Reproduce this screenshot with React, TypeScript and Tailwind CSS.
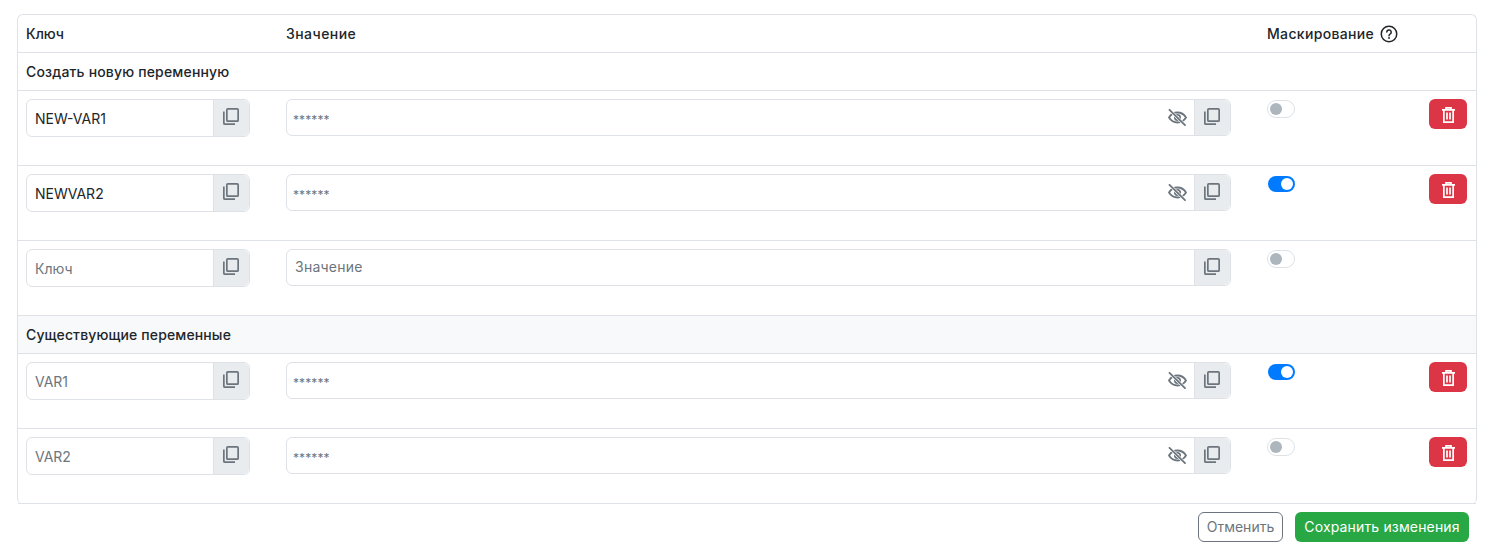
const CopyIcon = () => (
  <svg width="16" height="17" viewBox="0 0 16 17" fill="none" stroke="#6c757d" strokeWidth="1.7">
    <rect x="3.850" y="0.850" width="11.300" height="12.300" rx="1" />
    <path d="M.85 3.500v11.650a1 1 0 0 0 1 1h10.150" />
  </svg>
);

const EyeOffIcon = () => (
  <svg width="19" height="17" viewBox="0 0 19 17" fill="none" stroke="#6c757d" strokeWidth="1.8" strokeLinecap="round">
    <path d="M1 8.500c2-3.300 5-5 8.500-5s6.500 1.700 8.500 5c-2 3.300-5 5-8.500 5s-6.500-1.700-8.500-5z" />
    <circle cx="9.500" cy="8.500" r="2.600" />
    <path d="M1.500 .9L17 16.100" stroke="#fff" strokeWidth="3" />
    <path d="M1.500 .9L17 16.100" />
  </svg>
);

const TrashIcon = () => (
  <svg width="13" height="16" viewBox="0 0 13 16" fill="none" stroke="#fff" strokeWidth="1.700">
    <path d="M0 2.850h13M4 2.500V.85h5V2.500" />
    <path d="M1.850 2.850v12.300h9.300V2.850" />
    <path d="M5 5.500v7M8 5.500v7" />
  </svg>
);

const HelpIcon = () => (
  <svg width="18" height="18" viewBox="0 0 18 18" fill="none" stroke="#212529" strokeWidth="1.500" strokeLinecap="round">
    <circle cx="9" cy="9" r="7.750" />
    <path d="M6.800 7.100a2.200 2.200 0 1 1 3.500 1.800c-.8.500-1.300.9-1.300 1.800" />
    <path d="M9 13v.1" strokeWidth="1.800" />
  </svg>
);

const Toggle = ({ on }: { on: boolean }) =>
  on ? (
    <span className="mt-[1px] ml-[1px] flex h-4 w-[27px] items-center justify-end rounded-full bg-[#007bff] pr-[2px]">
      <span className="h-3 w-3 rounded-full bg-white" />
    </span>
  ) : (
    <span className="flex h-[18px] w-7 items-center rounded-full border border-[#dee2e6] bg-white pl-[2px]">
      <span className="h-3 w-3 rounded-full bg-[#adb5bd]" />
    </span>
  );

const CopyAddon = () => (
  <span className="flex w-9 shrink-0 items-center justify-center rounded-r-md border-l border-[#dee2e6] bg-[#e9ecef] pr-[2px] pb-[3px]">
    <CopyIcon />
  </span>
);

type RowProps = {
  keyName: string;
  keyFilled?: boolean;
  masked?: boolean;
  on?: boolean;
  removable?: boolean;
};

const VarRow = ({ keyName, keyFilled, masked = true, on = false, removable = true }: RowProps) => (
  <div className="flex h-[75px] border-b border-[#dee2e6] pt-2 pr-[9px] pl-2">
    <div className="flex h-[38px] w-[224px] rounded-md border border-[#dee2e6] bg-white">
      <span className={`flex flex-1 items-center pt-[2px] pl-2 ${keyFilled ? "text-[#212529]" : "text-[#6c757d]"}`}>{keyName}</span>
      <CopyAddon />
    </div>
    <div className="ml-9 flex h-[37px] w-[945px] rounded-md border border-[#dee2e6] bg-white">
      {masked ? (
        <>
          <span className="flex flex-1 items-center pt-1 pl-[6px] text-xs tracking-[0.1px] text-[#6c757d]">******</span>
          <span className="flex w-[34px] items-center justify-center">
            <EyeOffIcon />
          </span>
        </>
      ) : (
        <span className="flex flex-1 items-center pb-[2px] pl-2 tracking-[0.25px] text-[#6c757d]">Значение</span>
      )}
      <CopyAddon />
    </div>
    <div className="ml-9 pt-[1px]">
      <Toggle on={on} />
    </div>
    {removable && (
      <button className="ml-auto flex h-[30px] w-[38px] items-center justify-center rounded-md bg-[#dc3545] pt-[1px]">
        <TrashIcon />
      </button>
    )}
  </div>
);

const App = () => {
  return (
    <div className="h-[554px] w-[1492px] bg-white pt-[14px] pl-[17px] font-['Inter',sans-serif] text-sm text-[#212529]">
      <div className="w-[1460px] rounded-md border border-b-0 border-[#dee2e6]">
        <div className="flex h-[38px] items-center border-b border-[#dee2e6] px-2 font-medium">
          <span className="w-[260px]">Ключ</span>
          <span className="w-[981px] tracking-[0.45px]">Значение</span>
          <span className="flex items-center gap-[6px] tracking-[0.33px]">
            Маскирование <HelpIcon />
          </span>
        </div>
        <div className="flex h-[38px] items-center border-b border-[#dee2e6] px-2 font-medium tracking-[0.17px]">Создать новую переменную</div>
        <VarRow keyName="NEW-VAR1" keyFilled />
        <VarRow keyName="NEWVAR2" keyFilled on />
        <VarRow keyName="Ключ" masked={false} removable={false} />
        <div className="flex h-[38px] items-center border-b border-[#dee2e6] bg-[#f8f9fa] px-2 font-medium tracking-[0.13px]">Существующие переменные</div>
        <VarRow keyName="VAR1" on />
        <VarRow keyName="VAR2" />
      </div>
      <div className="mt-2 flex w-[1452px] justify-end gap-3">
        <button className="h-[30px] w-[85px] rounded-md border border-[#6c757d] text-[#6c757d]">Отменить</button>
        <button className="h-[30px] w-[174px] rounded-md bg-[#28a745] tracking-[0.15px] text-white">Сохранить изменения</button>
      </div>
    </div>
  );
};

export default App;
